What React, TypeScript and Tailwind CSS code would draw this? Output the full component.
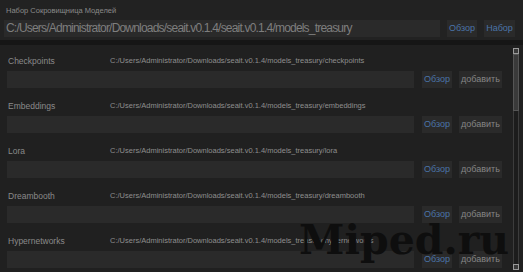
import React from "react";

const rows = [
  { name: "Checkpoints", path: "C:/Users/Administrator/Downloads/seait.v0.1.4/models_treasury/checkpoints" },
  { name: "Embeddings", path: "C:/Users/Administrator/Downloads/seait.v0.1.4/models_treasury/embeddings" },
  { name: "Lora", path: "C:/Users/Administrator/Downloads/seait.v0.1.4/models_treasury/lora" },
  { name: "Dreambooth", path: "C:/Users/Administrator/Downloads/seait.v0.1.4/models_treasury/dreambooth" },
  { name: "Hypernetworks", path: "C:/Users/Administrator/Downloads/seait.v0.1.4/models_treasury/hypernetworks" },
];

export default function App() {
  return (
    <div
      className="w-[523px] h-[272px] bg-[#161616] flex flex-col overflow-hidden relative"
      style={{ fontFamily: '"Liberation Sans", Arial, sans-serif' }}
    >
      {/* top panel */}
      <div className="h-[40px] bg-[#222222] px-[4px] pt-[5px] flex flex-col">
        <div className="h-[11px] text-[7.5px] leading-[11px] text-[#8a8a8a] pl-[2px]">Набор Сокровищница Моделей</div>
        <div className="flex items-center mt-[4px] h-[17px]">
          <div className="w-[436px] shrink-0 h-[17px] bg-[#2a2a2a] text-[12px] tracking-[-0.8px] leading-[17px] text-[#7e7e7e] pl-[2px] whitespace-nowrap overflow-hidden">
            C:/Users/Administrator/Downloads/seait.v0.1.4/seait.v0.1.4/models_treasury
          </div>
          <div className="ml-[7px] w-[30px] shrink-0 h-[17px] bg-[#2a2a2a] text-[9px] leading-[17px] text-[#4a74a8] text-center">Обзор</div>
          <div className="ml-[7px] w-[31px] shrink-0 h-[17px] bg-[#2a2a2a] text-[9px] leading-[17px] text-[#4a74a8] text-center">Набор</div>
        </div>
      </div>

      {/* scroll panel */}
      <div className="mt-[5px] flex-1 bg-[#202020] flex overflow-hidden">
        <div className="flex-1 pl-[7px] flex flex-col">
          {rows.map((r) => (
            <div key={r.name} className="h-[45px] shrink-0 pt-[11px] flex flex-col">
              <div className="h-[10px] flex items-center whitespace-nowrap">
                <div className="w-[103px] pl-[1px] text-[8.5px] text-[#8a8a8a]">{r.name}</div>
                <div className="text-[7.5px] text-[#8e8e8e]">{r.path}</div>
              </div>
              <div className="mt-[5px] h-[17px] flex items-center">
                <div className="w-[407px] h-[17px] bg-[#2a2a2a]" />
                <div className="ml-[8px] w-[30px] h-[17px] bg-[#2a2a2a] text-[9px] leading-[17px] text-[#4a74a8] text-center">Обзор</div>
                <div className="ml-[7px] w-[43px] h-[17px] bg-[#2a2a2a] text-[9px] leading-[17px] text-[#858585] text-center">добавить</div>
              </div>
            </div>
          ))}
        </div>
        {/* scrollbar */}
        <div className="w-[14px] shrink-0 flex flex-col items-center pt-[3px] pb-[2px]">
          <div className="w-[6px] h-[6px] border border-[#9a9a9a] bg-[#3a3a3a]" />
          <div className="w-[6px] flex-1 border-x border-[#3c3c3c] bg-[#1c1c1c] relative">
            <div className="absolute left-[-1px] right-[-1px] top-[0px] h-[57px] bg-[#3a3a3a] border border-[#555]" />
          </div>
          <div className="w-[6px] h-[6px] border border-[#9a9a9a] bg-[#3a3a3a]" />
        </div>
      </div>

      {/* watermark */}
      <div
        className="absolute left-[299px] top-[220px] text-[41px] font-bold leading-none text-[#0e0e0e] pointer-events-none"
        style={{ fontFamily: '"DejaVu Serif", "Liberation Serif", serif' }}
      >
        Miped.ru
      </div>
    </div>
  );
}
